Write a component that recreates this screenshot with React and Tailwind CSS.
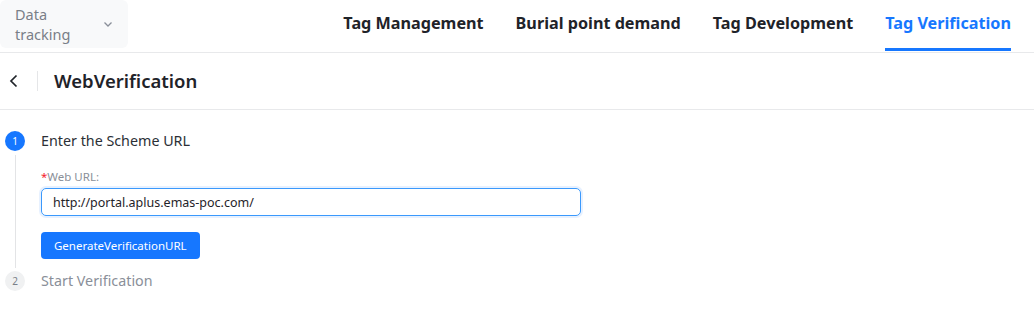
import React, { useState } from "react";

const tabs = ["Tag Management", "Burial point demand", "Tag Development", "Tag Verification"];

const App = () => {
  const [activeTab, setActiveTab] = useState("Tag Verification");
  const [url, setUrl] = useState("http://portal.aplus.emas-poc.com/");

  return (
    <div className="min-h-screen bg-white font-['Noto_Sans',sans-serif]">
      {/* top header */}
      <div className="flex h-[53px] items-start border-b border-[#e8e9eb]">
        <div className="flex h-[48px] w-[128px] items-center justify-between rounded-md bg-[#f8f9fa] pl-[15px] pr-[14px]">
          <span className="text-[14.5px] leading-[20px] text-[#7a7f88]">
            Data
            <br />
            tracking
          </span>
          <svg width="12" height="12" viewBox="0 0 12 12" className="text-[#8a8f99]">
            <path d="M2.5 4.5 L6 8 L9.5 4.5" fill="none" stroke="currentColor" strokeWidth="1.3" />
          </svg>
        </div>
        <nav className="ml-auto mr-[23px] flex h-full gap-[32px]">
          {tabs.map((tab) => (
            <button
              key={tab}
              onClick={() => setActiveTab(tab)}
              className={`relative flex h-full items-center pb-[5px] text-[16.2px] font-bold ${
                activeTab === tab ? "text-[#1677ff]" : "text-[#1f2329]"
              }`}
            >
              {tab}
              {activeTab === tab && (
                <span className="absolute bottom-[1px] left-0 right-0 h-[3px] bg-[#1677ff]" />
              )}
            </button>
          ))}
        </nav>
      </div>

      {/* page title */}
      <div className="flex h-[57px] items-center border-b border-[#e8e9eb]">
        <button className="ml-[7px] flex h-[20px] w-[14px] items-center justify-center text-[#1f2329]">
          <svg width="12" height="14" viewBox="0 0 12 14">
            <path d="M8.5 1.5 L3 7 L8.5 12.5" fill="none" stroke="currentColor" strokeWidth="1.7" />
          </svg>
        </button>
        <div className="ml-[16px] h-[20px] w-px bg-[#e5e6e8]" />
        <h1 className="ml-[16px] text-[18.5px] font-semibold text-[#1f2329]">WebVerification</h1>
      </div>

      {/* steps */}
      <div className="pl-[5px] pt-[21px]">
        <div className="flex">
          <div className="flex w-[20px] flex-col items-center">
            <div className="flex h-[20px] w-[20px] items-center justify-center rounded-full bg-[#1677ff] text-[10px] text-white">
              1
            </div>
            <div className="mt-[4px] w-px flex-1 bg-[#e3e4e6]" />
          </div>
          <div className="ml-[16px] flex flex-col items-start pb-[9px]">
            <div className="text-[14.3px] leading-[20px] text-[#2b2f36]">Enter the Scheme URL</div>
            <div className="mt-[19px] text-[11.5px] leading-[14px] text-[#8a8f99]">
              <span className="text-[#f5222d]">*</span>Web URL:
            </div>
            <input
              value={url}
              onChange={(e) => setUrl(e.target.value)}
              className="mt-[4px] block h-[28px] w-[540px] rounded-[5px] border border-[#3b99fc] px-[11px] text-[12.5px] text-[#1f2329] shadow-[0_0_0_2px_rgba(22,119,255,0.1)] outline-none"
            />
            <button className="mt-[16px] block h-[27px] rounded-[4px] bg-[#1677ff] px-[13px] text-[11.5px] text-white">
              GenerateVerificationURL
            </button>
          </div>
        </div>
        <div className="mt-[3px] flex items-center">
          <div className="flex h-[20px] w-[20px] items-center justify-center rounded-full bg-[#f0f1f2] text-[10px] text-[#7a7f88]">
            2
          </div>
          <div className="ml-[16px] text-[14.3px] leading-[20px] text-[#8a8f99]">Start Verification</div>
        </div>
      </div>
    </div>
  );
};

export default App;
